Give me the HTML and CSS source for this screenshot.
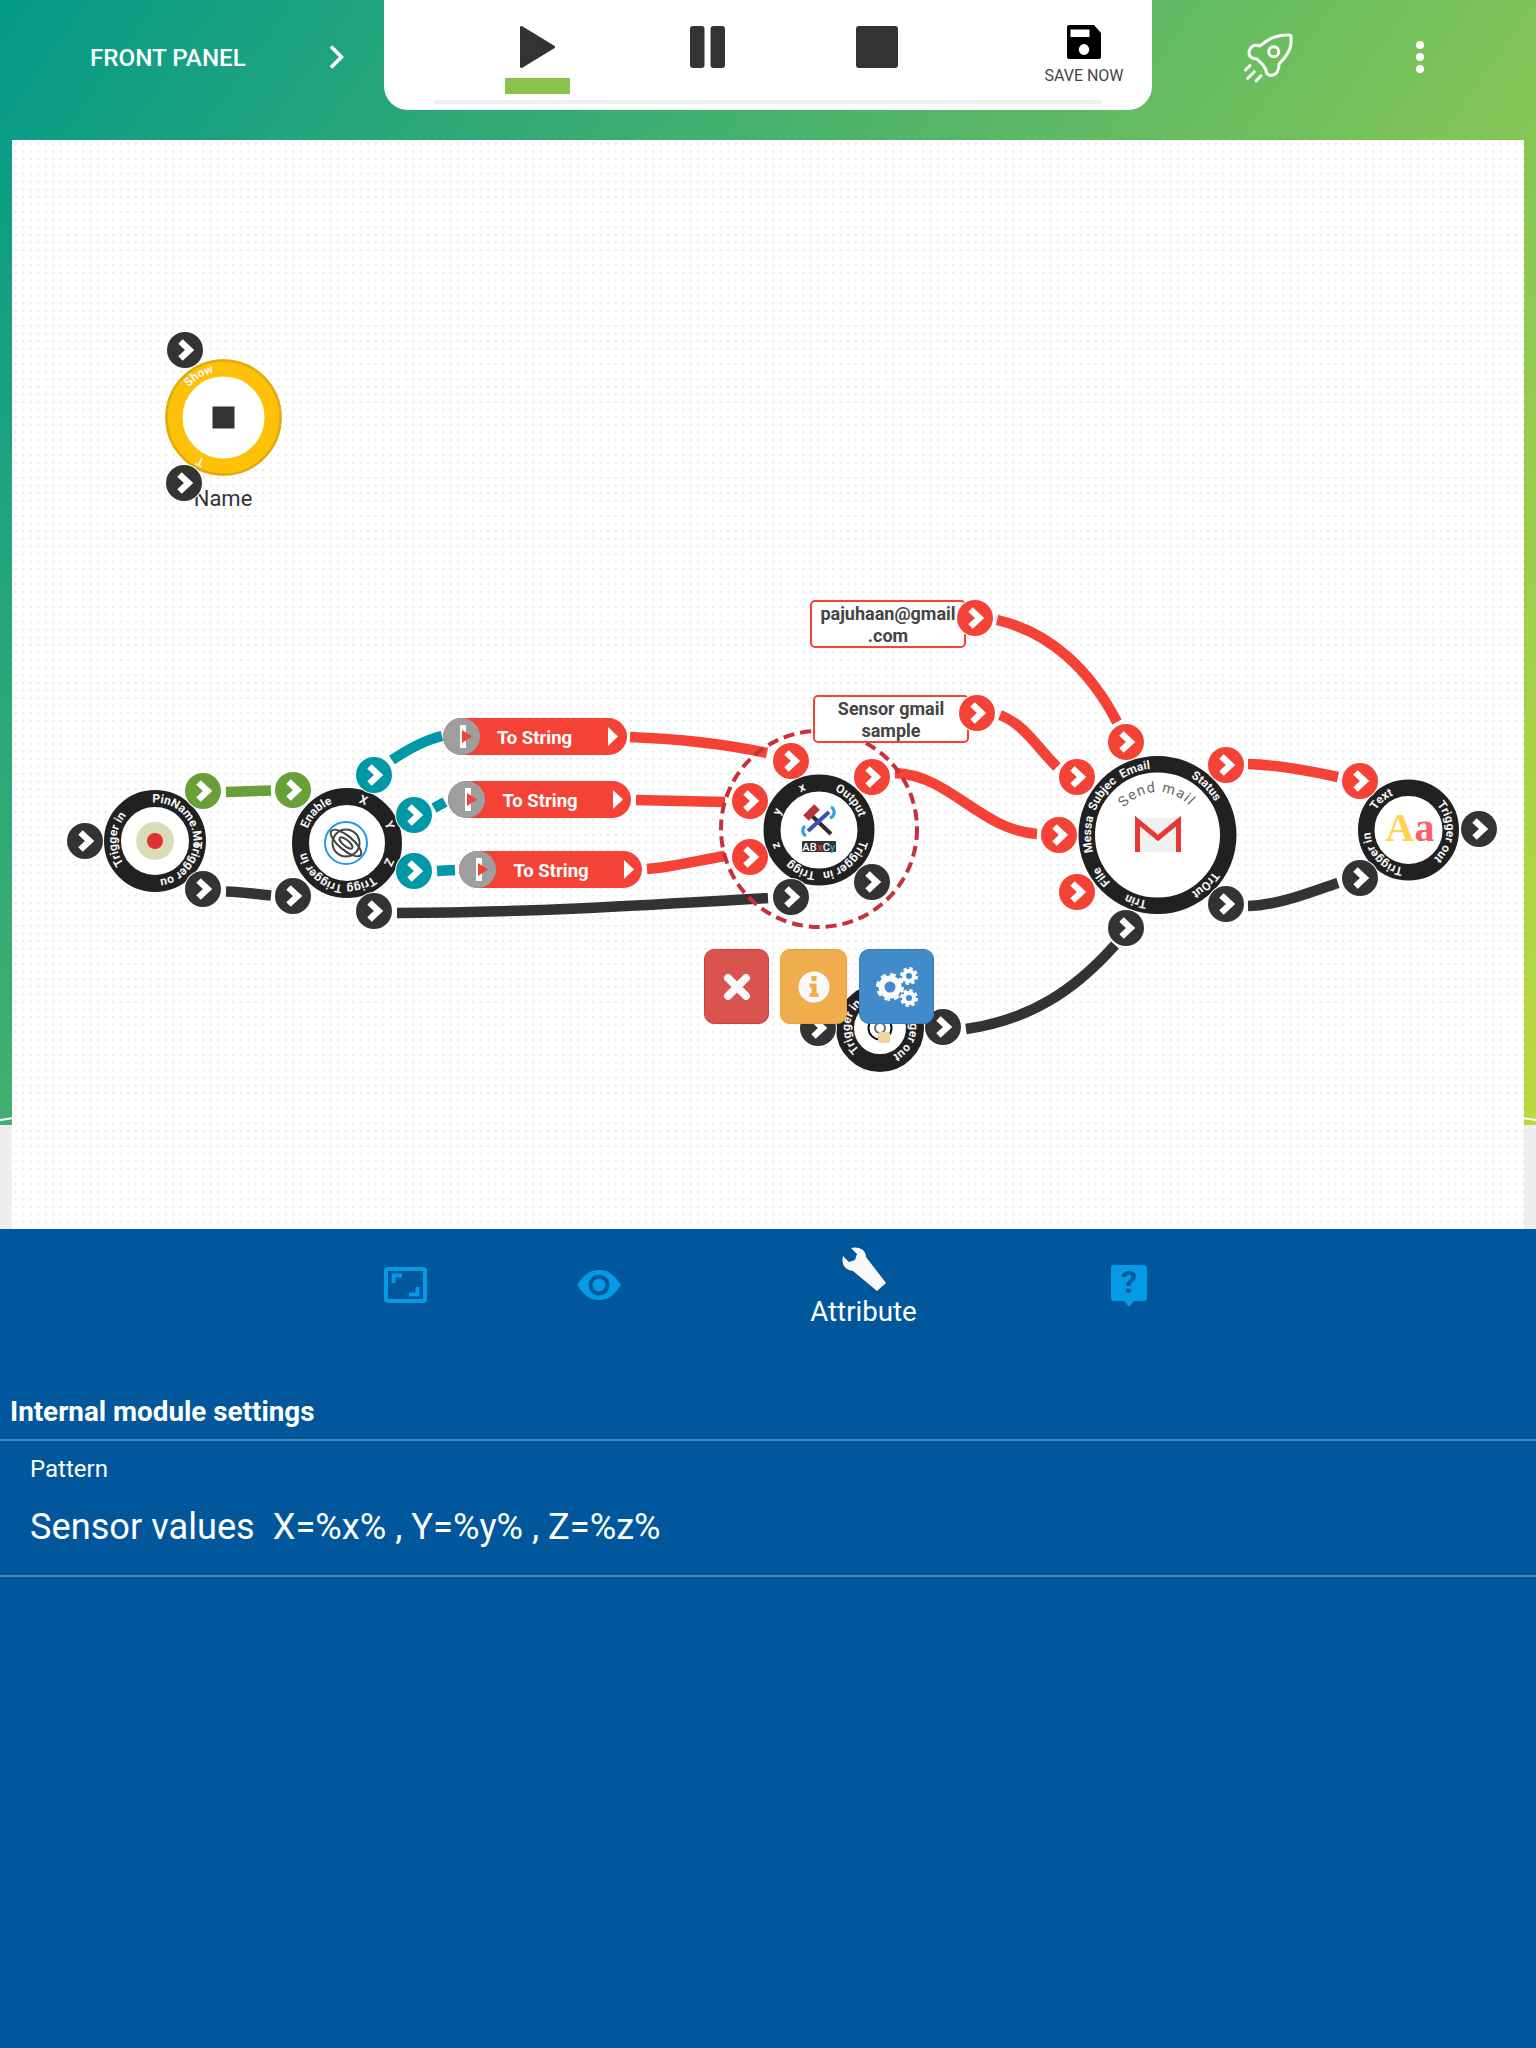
FILE: index.html
```html
<!DOCTYPE html>
<html lang="en">
<head>
<meta charset="utf-8">
<title>Front Panel</title>
<link rel="stylesheet" href="styles.css">
</head>
<body>
<div class="stage">
  <header class="topbar">
    <div class="panel-title">
      <span class="title-text">FRONT PANEL</span>
      <svg class="title-chevron" viewBox="0 0 15 24"><path d="M2 1.5L12.5 12L2 22.5"/></svg>
    </div>
    <div class="transport">
      <div class="transport-row">
        <div class="tbtn tbtn-play">
          <svg class="ticon" width="35" height="42" viewBox="0 0 35 42"><path d="M1.5 1.5V40.5L33.5 21Z" class="dark-shape"/></svg>
          <span class="active-bar"></span>
        </div>
        <div class="tbtn">
          <svg class="ticon" width="35" height="42" viewBox="0 0 35 42"><rect width="14.5" height="42" rx="3" class="dark-fill"/><rect x="20.5" width="14.5" height="42" rx="3" class="dark-fill"/></svg>
        </div>
        <div class="tbtn">
          <svg class="ticon" width="42" height="42" viewBox="0 0 42 42"><rect width="42" height="42" rx="3" class="dark-fill"/></svg>
        </div>
        <div class="save">
          <svg class="save-icon" width="34" height="34" viewBox="0 0 34 34"><path d="M2 0H27L34 8V32Q34 34 32 34H2Q0 34 0 32V2Q0 0 2 0Z"/><rect x="3.5" y="4.5" width="19" height="7.5" fill="#fff"/><ellipse cx="17" cy="24.5" rx="5.2" ry="5.4" fill="#fff"/></svg>
          <span class="save-label">SAVE NOW</span>
        </div>
      </div>
      <div class="progress"></div>
    </div>
    <div class="actions">
      <svg class="rocket" width="47" height="47" viewBox="0 0 47 47"><path d="M45 2C45 1 43.5 1 42 1C33 1 24 4 18 9L13.5 12C9 10 5 12 3.5 16C2 20 4 24 8 24.5L11 25L17 31L20 36C20 41 24 42 27 41C31 40 33 35 33 30C39 24 45 17 45 9Z"/><circle cx="27.7" cy="17.7" r="5"/><path d="M-.5 36L4 31.7M1.7 44.3L8.3 37.7M10 47L15 41.7"/></svg>
      <div class="dots"><i></i><i></i><i></i></div>
    </div>
  </header>

  <main class="canvas">
    <svg class="diagram" width="1512" height="1089" viewBox="12 140 1512 1089">
      <defs>
        <g id="port">
          <circle r="19" fill="#fff"/>
          <circle r="18"/>
          <path d="M-4.5 -8.5L4.5 0L-4.5 8.5" fill="none" stroke="#fff" stroke-width="6.5"/>
        </g>
        <g id="pill-cap">
          <circle cx="18.5" cy="18.5" r="18.5" fill="#9e9e9e"/>
          <path d="M17 7H23V30H17Z" fill="#fff"/>
          <path d="M19 12L29 18.5L19 25Z" fill="#f44336"/>
        </g>
        <path id="t-yellow" d="M223.5 371.5A46 46 0 1 1 223.5 463.5A46 46 0 1 1 223.5 371.5"/>
        <path id="t-n1" d="M155 802.5A38.5 38.5 0 1 1 155 879.5A38.5 38.5 0 1 1 155 802.5"/>
        <path id="t-n2" d="M347 801A42 42 0 1 1 347 885A42 42 0 1 1 347 801"/>
        <path id="t-n3" d="M819 788A42 42 0 1 1 819 872A42 42 0 1 1 819 788"/>
        <path id="t-mail" d="M1157.5 768.5A66.5 66.5 0 1 1 1157.5 901.5A66.5 66.5 0 1 1 1157.5 768.5"/>
        <path id="t-send" d="M1157.5 792A43 43 0 1 1 1157.5 878A43 43 0 1 1 1157.5 792"/>
        <path id="t-text" d="M1408.5 792A38 38 0 1 1 1408.5 868A38 38 0 1 1 1408.5 792"/>
        <path id="t-btn" d="M880 998A30 30 0 1 1 880 1058A30 30 0 1 1 880 998"/>
      </defs>

      <g class="wires">
        <path class="w-green" d="M226 792L271 790.5"/>
        <path class="w-dark" d="M226 891.5C242 892 256 894 271 895.5"/>
        <path class="w-teal" d="M392 760C410 748 425 740 442 736"/>
        <path class="w-teal" d="M434 808L445 802"/>
        <path class="w-teal" d="M437 871L455 870"/>
        <path class="w-dark" d="M397 913C520 913 650 905 768 898"/>
        <path class="w-red" d="M630 737C680 739 730 745 767 753"/>
        <path class="w-red" d="M636 800L725 802"/>
        <path class="w-red" d="M647 869C675 867 700 860 725 856"/>
        <path class="w-red" d="M895 773C950 775 980 830 1037 834"/>
        <path class="w-red" d="M997 620C1050 632 1090 670 1117 722"/>
        <path class="w-red" d="M1000 715C1025 725 1035 745 1057 767"/>
        <path class="w-red" d="M1248 764C1280 765 1310 771 1338 777"/>
        <path class="w-dark" d="M1248 906C1280 905 1310 892 1338 883"/>
        <path class="w-dark" d="M966 1029C1030 1020 1075 990 1115 945"/>
      </g>

      <circle class="selection" cx="819" cy="829" r="98"/>

      <!-- Yellow show node -->
      <circle class="yellow-ring" cx="223.5" cy="417.5" r="49.5"/>
      <circle class="yellow-edge" cx="223.5" cy="417.5" r="57"/>
      <rect class="stop-mark" x="212.5" y="406.5" width="22" height="22"/>
      <g transform="rotate(311 223.5 417.5)"><text class="ring-text"><textPath href="#t-yellow">Show</textPath></text></g>
      <g transform="rotate(203 223.5 417.5)"><text class="ring-text"><textPath href="#t-yellow">T</textPath></text></g>
      <text class="node-name" x="223" y="506">Name</text>

      <!-- Pin node -->
      <circle class="ring" cx="155" cy="841" r="42.5" stroke-width="17"/>
      <circle cx="155" cy="841" r="19" fill="#d9dcb8"/>
      <circle cx="155" cy="841" r="8" fill="#e03030"/>
      <g transform="rotate(234 155 841)"><text class="ring-text"><textPath href="#t-n1">Trigger in</textPath></text></g>
      <g transform="rotate(356 155 841)"><text class="ring-text"><textPath href="#t-n1">PinName.Mo</textPath></text></g>
      <g transform="rotate(90 155 841)"><text class="ring-text"><textPath href="#t-n1">Trigger ou</textPath></text></g>

      <!-- Accelerometer node -->
      <circle class="ring" cx="347" cy="843" r="46.5" stroke-width="17"/>
      <circle cx="346" cy="843" r="21" fill="#fff" stroke="#1e9be0" stroke-width="2"/>
      <g class="orbit">
        <circle cx="346" cy="843" r="13.5"/>
        <ellipse cx="346" cy="843" rx="19" ry="7" transform="rotate(40 346 843)"/>
        <ellipse cx="346" cy="843" rx="8" ry="3" transform="rotate(40 346 843)"/>
      </g>
      <g transform="rotate(290 347 843)"><text class="ring-text"><textPath href="#t-n2">Enable</textPath></text></g>
      <g transform="rotate(16 347 843)"><text class="ring-text"><textPath href="#t-n2">X</textPath></text></g>
      <g transform="rotate(62 347 843)"><text class="ring-text"><textPath href="#t-n2">Y</textPath></text></g>
      <g transform="rotate(110 347 843)"><text class="ring-text"><textPath href="#t-n2">Z</textPath></text></g>
      <g transform="rotate(142 347 843)"><text class="ring-text"><textPath href="#t-n2">Trigg</textPath></text></g>
      <g transform="rotate(186 347 843)"><text class="ring-text"><textPath href="#t-n2">Trigger in</textPath></text></g>

      <!-- Pattern node -->
      <circle class="ring" cx="819" cy="830" r="47" stroke-width="17"/>
      <g class="tools">
        <path d="M810 814L831 834" stroke="#2b2b2b" stroke-width="4"/>
        <path d="M806 818L817 807" stroke="#b5343c" stroke-width="8"/>
        <path d="M829 812L808 831" stroke="#3f51b5" stroke-width="4"/>
        <path d="M831 807A6 6 0 0 1 830 818" stroke="#29a3e0" stroke-width="3" fill="none"/>
        <path d="M805 826A6 6 0 0 0 806 836" stroke="#29a3e0" stroke-width="3" fill="none"/>
      </g>
      <rect x="802" y="841" width="34" height="11" fill="#333" rx="1"/>
      <text class="abxy" x="819" y="850.5">AB<tspan fill="#e53935">x</tspan>C<tspan fill="#29a3e0">y</tspan></text>
      <g transform="rotate(334 819 830)"><text class="ring-text"><textPath href="#t-n3">x</textPath></text></g>
      <g transform="rotate(22 819 830)"><text class="ring-text"><textPath href="#t-n3">Output</textPath></text></g>
      <g transform="rotate(104 819 830)"><text class="ring-text"><textPath href="#t-n3">Trigger in</textPath></text></g>
      <g transform="rotate(185 819 830)"><text class="ring-text"><textPath href="#t-n3">Trigg</textPath></text></g>
      <g transform="rotate(246 819 830)"><text class="ring-text"><textPath href="#t-n3">z</textPath></text></g>
      <g transform="rotate(290 819 830)"><text class="ring-text"><textPath href="#t-n3">y</textPath></text></g>

      <!-- Gmail node -->
      <circle class="ring" cx="1157.5" cy="835" r="70.75" stroke-width="16.5"/>
      <rect x="1135" y="818" width="46" height="34" fill="#f0f0f0"/>
      <path d="M1137.5 852V821L1158 838L1178.5 821V852" fill="none" stroke="#e53935" stroke-width="5"/>
      <g transform="rotate(309 1157.5 835)"><text class="send-text"><textPath href="#t-send">Send mail</textPath></text></g>
      <g transform="rotate(328 1157.5 835)"><text class="ring-text"><textPath href="#t-mail">Email</textPath></text></g>
      <g transform="rotate(291 1157.5 835)"><text class="ring-text"><textPath href="#t-mail">Subjec</textPath></text></g>
      <g transform="rotate(255 1157.5 835)"><text class="ring-text"><textPath href="#t-mail">Messa</textPath></text></g>
      <g transform="rotate(225 1157.5 835)"><text class="ring-text"><textPath href="#t-mail">File</textPath></text></g>
      <g transform="rotate(189 1157.5 835)"><text class="ring-text"><textPath href="#t-mail">Trin</textPath></text></g>
      <g transform="rotate(123 1157.5 835)"><text class="ring-text"><textPath href="#t-mail">TrOut</textPath></text></g>
      <g transform="rotate(30 1157.5 835)"><text class="ring-text"><textPath href="#t-mail">Status</textPath></text></g>

      <!-- Text node -->
      <circle class="ring" cx="1408.5" cy="830" r="42.25" stroke-width="16.5"/>
      <text class="aa" x="1410" y="841"><tspan fill="#ffd54f">A</tspan><tspan fill="#ff5c6c">a</tspan></text>
      <g transform="rotate(301 1408.5 830)"><text class="ring-text"><textPath href="#t-text">Text</textPath></text></g>
      <g transform="rotate(48 1408.5 830)"><text class="ring-text"><textPath href="#t-text">Trigger out</textPath></text></g>
      <g transform="rotate(188 1408.5 830)"><text class="ring-text"><textPath href="#t-text">Trigger in</textPath></text></g>

      <!-- Button node -->
      <circle class="ring" cx="880" cy="1028" r="35" stroke-width="18"/>
      <circle cx="880" cy="1028" r="11.5" fill="none" stroke="#111" stroke-width="2"/>
      <circle cx="880" cy="1028" r="5" fill="none" stroke="#667" stroke-width="2"/>
      <rect x="878" y="1032" width="12" height="11" rx="2" fill="#f3d49a"/>
      <g transform="rotate(223 880 1028)"><text class="ring-text"><textPath href="#t-btn">Trigger in</textPath></text></g>
      <g transform="rotate(40 880 1028)"><text class="ring-text"><textPath href="#t-btn">Trigger out</textPath></text></g>

      <!-- To String pills -->
      <rect class="pill" x="443" y="718" width="184" height="37" rx="18.5"/>
      <use href="#pill-cap" x="443" y="718"/>
      <path class="pill-out" d="M608 727L618 736.5L608 746Z"/>
      <text class="pill-text" x="534.5" y="743.5">To String</text>
      <rect class="pill" x="448" y="781" width="183" height="37" rx="18.5"/>
      <use href="#pill-cap" x="448" y="781"/>
      <path class="pill-out" d="M613 790L623 799.5L613 809Z"/>
      <text class="pill-text" x="540" y="806.5">To String</text>
      <rect class="pill" x="459" y="851" width="183" height="37" rx="18.5"/>
      <use href="#pill-cap" x="459" y="851"/>
      <path class="pill-out" d="M624 860L634 869.5L624 879Z"/>
      <text class="pill-text" x="551" y="876.5">To String</text>

      <!-- Value labels -->
      <rect class="value-box" x="811" y="601" width="154" height="46" rx="4"/>
      <text class="value-text" x="888" y="620">pajuhaan@gmail</text>
      <text class="value-text" x="888" y="641.5">.com</text>
      <rect class="value-box" x="814" y="696" width="154" height="46" rx="4"/>
      <text class="value-text" x="891" y="715">Sensor gmail</text>
      <text class="value-text" x="891" y="737">sample</text>

      <!-- Ports -->
      <use href="#port" class="p-dark" x="185" y="350"/>
      <use href="#port" class="p-dark" x="184" y="483"/>
      <use href="#port" class="p-dark" x="85" y="841"/>
      <use href="#port" class="p-green" x="203" y="791"/>
      <use href="#port" class="p-dark" x="203" y="889"/>
      <use href="#port" class="p-green" x="293" y="790"/>
      <use href="#port" class="p-dark" x="293" y="896"/>
      <use href="#port" class="p-teal" x="374" y="775"/>
      <use href="#port" class="p-teal" x="414" y="815"/>
      <use href="#port" class="p-teal" x="414" y="871"/>
      <use href="#port" class="p-dark" x="374" y="911"/>
      <use href="#port" class="p-red" x="791" y="761"/>
      <use href="#port" class="p-red" x="750" y="801"/>
      <use href="#port" class="p-red" x="750" y="857"/>
      <use href="#port" class="p-red" x="872" y="777"/>
      <use href="#port" class="p-dark" x="872" y="882"/>
      <use href="#port" class="p-dark" x="791" y="897"/>
      <use href="#port" class="p-red" x="975" y="618"/>
      <use href="#port" class="p-red" x="977" y="713"/>
      <use href="#port" class="p-red" x="1126" y="742"/>
      <use href="#port" class="p-red" x="1077" y="777"/>
      <use href="#port" class="p-red" x="1059" y="835"/>
      <use href="#port" class="p-red" x="1077" y="892"/>
      <use href="#port" class="p-dark" x="1126" y="928"/>
      <use href="#port" class="p-red" x="1226" y="765"/>
      <use href="#port" class="p-dark" x="1226" y="904"/>
      <use href="#port" class="p-red" x="1360" y="781"/>
      <use href="#port" class="p-dark" x="1360" y="878"/>
      <use href="#port" class="p-dark" x="1479" y="829"/>
      <use href="#port" class="p-dark" x="818" y="1028"/>
      <use href="#port" class="p-dark" x="943" y="1027"/>
    </svg>

    <div class="node-actions">
      <div class="act act-del">
        <svg width="30" height="30" viewBox="0 0 30 30"><path d="M6 6L24 24M24 6L6 24" class="act-x"/></svg>
      </div>
      <div class="act act-info">
        <svg width="32" height="32" viewBox="0 0 32 32"><circle cx="16" cy="16" r="15.5" class="act-fill"/><path d="M13.5 5H18.5V10H13.5ZM11.5 12.5H18.5V22H20.5V26H11.5V22H13.5V16.5H11.5Z" fill="#f0ad4e"/></svg>
      </div>
      <div class="act act-gear">
        <svg width="44" height="42" viewBox="0 0 44 42">
          <g class="cog"><circle cx="15" cy="21" r="8.5" stroke-width="6"/><circle cx="15" cy="21" r="12" stroke-width="4" stroke-dasharray="5.4 4"/></g>
          <g class="cog"><circle cx="34" cy="10" r="5" stroke-width="4"/><circle cx="34" cy="10" r="7.5" stroke-width="3" stroke-dasharray="3.4 2.5"/></g>
          <g class="cog"><circle cx="34" cy="32" r="5" stroke-width="4"/><circle cx="34" cy="32" r="7.5" stroke-width="3" stroke-dasharray="3.4 2.5"/></g>
        </svg>
      </div>
    </div>
  </main>
</div>

<section class="props">
  <nav class="tabs">
    <div class="tab tab-narrow">
      <svg class="tab-icon" width="43" height="36" viewBox="0 0 43 36"><rect x="2" y="2" width="39" height="32" rx="2" class="frame"/><path d="M9.5 16V8.5H18M33.5 20V27.5H25" class="frame-marks"/></svg>
    </div>
    <div class="tab tab-narrow">
      <svg class="tab-icon eye" width="44" height="30" viewBox="0 0 44 30"><path d="M0 15C8 3 14 0 22 0C30 0 36 3 44 15C36 27 30 30 22 30C14 30 8 27 0 15Z" fill="#039be5"/><circle cx="22" cy="15" r="10.5" fill="#01579b"/><circle cx="22" cy="15" r="6.5" fill="#039be5"/></svg>
    </div>
    <div class="tab tab-wide">
      <svg width="44" height="44" viewBox="0 0 44 44"><path d="M9 1L15 7L13 13L7 15L1 9C-1 17 3 23 11 24L35 44L44 36L24 10C24 3 17 -1 9 1Z" fill="#f9f9f9"/></svg>
      <span class="tab-label">Attribute</span>
    </div>
    <div class="tab tab-narrow">
      <svg class="tab-icon help" width="36" height="42" viewBox="0 0 36 42"><path d="M3 0H33Q36 0 36 3V33Q36 36 33 36H23L18 42L13 36H3Q0 36 0 33V3Q0 0 3 0Z" fill="#039be5"/><text class="help-mark" x="18" y="28">?</text></svg>
    </div>
  </nav>
  <h2 class="settings-title">Internal module settings</h2>
  <div class="field">
    <div class="field-label">Pattern</div>
    <div class="field-value">Sensor values  X=%x% , Y=%y% , Z=%z%</div>
  </div>
</section>
</body>
</html>
```

FILE: styles.css
```css
* { box-sizing: border-box; }
html, body { margin: 0; padding: 0; }
body {
  width: 1536px;
  height: 2048px;
  overflow: hidden;
  background: #01579b;
  font-family: Roboto, "Liberation Sans", sans-serif;
  color: #fff;
}

.stage {
  position: relative;
  height: 1229px;
  background: linear-gradient(125deg, #039a89, #bcd93e) top / 100% 1125px no-repeat, #eeeeee;
}
.stage::before, .stage::after {
  content: "";
  position: absolute;
  top: 1118px;
  width: 14px;
  height: 2px;
  background: #fff;
}
.stage::before { left: 0; transform: rotate(-8deg); }
.stage::after { right: 0; transform: rotate(8deg); }

.topbar { display: flex; height: 140px; align-items: flex-start; }

.panel-title {
  width: 384px;
  height: 114px;
  padding: 0 40px 0 90px;
  display: flex;
  align-items: center;
  justify-content: space-between;
}
.title-text { font-size: 24.2px; font-weight: 500; color: #fff; white-space: nowrap; padding-top: 2px; }
.title-chevron { width: 15px; height: 24px; fill: none; stroke: #fff; stroke-width: 3.6; }

.transport {
  width: 768px;
  height: 110px;
  background: #fff;
  border-radius: 0 0 24px 24px;
  display: flex;
  flex-direction: column;
}
.transport-row { display: flex; height: 100px; padding-left: 68px; }
.tbtn {
  width: 170px;
  display: flex;
  flex-direction: column;
  align-items: center;
  padding-top: 26px;
}
.ticon { display: block; }
.dark-shape { fill: #343232; stroke: #343232; stroke-width: 3; stroke-linejoin: round; }
.dark-fill { fill: #343232; }
.active-bar { width: 65px; height: 16px; margin-top: 10px; background: #8bc34a; }
.save {
  margin-left: 61px;
  width: 122px;
  display: flex;
  flex-direction: column;
  align-items: center;
  padding-top: 25px;
}
.save-icon { display: block; fill: #000; }
.save-label { font-size: 16px; line-height: 20px; margin-top: 7px; color: #444; white-space: nowrap; }
.progress { height: 4px; margin: 0 50px; background: #eeeeee; }

.actions {
  flex: 1;
  height: 114px;
  padding-left: 94px;
  display: flex;
  align-items: center;
  gap: 123px;
}
.rocket { display: block; overflow: visible; fill: none; stroke: #fff; stroke-width: 3; stroke-linecap: round; stroke-linejoin: round; }
.dots { display: flex; flex-direction: column; gap: 4px; }
.dots i { display: block; width: 8px; height: 8px; border-radius: 50%; background: #fff; }

.canvas {
  position: relative;
  height: 1089px;
  margin: 0 12px;
  background-color: #fff;
  background-image: radial-gradient(circle, #ebebeb 1px, transparent 1.6px);
  background-size: 7.5px 7.6px;
}
.diagram { display: block; }

.wires path { fill: none; stroke-width: 10.5; }
.w-red { stroke: #f44336; }
.w-dark { stroke: #333; }
.w-teal { stroke: #0097a7; }
.w-green { stroke: #689f38; }
.selection { fill: none; stroke: #c9303e; stroke-width: 4; stroke-dasharray: 11 6; }
.ring { fill: #fff; stroke: #212121; }
.yellow-ring { fill: #fff; stroke: #ffc107; stroke-width: 17; }
.yellow-edge { fill: none; stroke: #e0ab0b; stroke-width: 2.5; }
.stop-mark { fill: #333; }
.node-name { font-size: 22px; fill: #333; text-anchor: middle; }
.ring-text { font-size: 12px; font-weight: 700; fill: #f6f6f6; }
.send-text { font-size: 14.5px; fill: #666; letter-spacing: 1.2px; }
.orbit ellipse, .orbit circle { fill: none; stroke: #444; stroke-width: 2; }
.tools path { stroke-linecap: butt; }
.abxy { font-size: 11px; fill: #fff; text-anchor: middle; font-weight: 500; letter-spacing: .2px; }
.aa { font-family: "Liberation Serif", serif; font-weight: 700; font-size: 40px; text-anchor: middle; }

.pill { fill: #f44336; }
.pill-out { fill: #fff; }
.pill-text { font-size: 18.5px; font-weight: 700; fill: #fff; text-anchor: middle; }
.value-box { fill: #fff; stroke: #f44336; stroke-width: 2; }
.value-text { font-size: 18px; font-weight: 700; fill: #444; text-anchor: middle; }

.p-dark { fill: #333; }
.p-red { fill: #f44336; }
.p-teal { fill: #0097a7; }
.p-green { fill: #689f38; }

.node-actions {
  position: absolute;
  left: 692px;
  top: 809px;
  display: flex;
  gap: 11px;
}
.act {
  height: 75px;
  border-radius: 10px;
  border: 1px solid;
  display: flex;
  align-items: center;
  justify-content: center;
}
.act-del { width: 65px; background: #d9534f; border-color: #d43f3a; }
.act-info { width: 67px; background: #f0ad4e; border-color: #eea236; }
.act-gear { width: 75px; margin-left: 1px; background: #428bca; border-color: #357ebd; }
.act-x { fill: none; stroke: #f9f9f9; stroke-width: 8; stroke-linecap: round; }
.act-fill { fill: #f9f9f9; }
.cog circle { fill: none; stroke: #f9f9f9; }

.props { height: 819px; background: #01579b; }
.tabs { display: flex; height: 160px; padding-left: 309px; }
.tab { display: flex; flex-direction: column; align-items: center; }
.tab-narrow { width: 193px; padding-top: 38px; }
.tab-wide { width: 337px; padding-top: 18px; }
.tab-icon { display: block; }
.eye { margin-top: 3px; }
.help { margin-top: -2px; }
.frame { fill: none; stroke: #039be5; stroke-width: 4; }
.frame-marks { fill: none; stroke: #039be5; stroke-width: 4; }
.help-mark { font-size: 32px; font-weight: 700; fill: #01579b; text-anchor: middle; }
.tab-label { font-size: 27.7px; line-height: 32px; margin-top: 5px; color: #fff; }

.settings-title {
  margin: 0;
  height: 52px;
  padding: 6px 0 0 10px;
  font-size: 27.8px;
  line-height: 34px;
  font-weight: 700;
  color: #fff;
  border-bottom: 2px solid #4a86b7;
}
.field {
  height: 136px;
  padding: 13px 0 0 30px;
  border-bottom: 2px solid #4a86b7;
}
.field-label { font-size: 24px; line-height: 30px; }
.field-value { font-size: 36.2px; line-height: 44px; margin-top: 21px; white-space: pre; }
```
